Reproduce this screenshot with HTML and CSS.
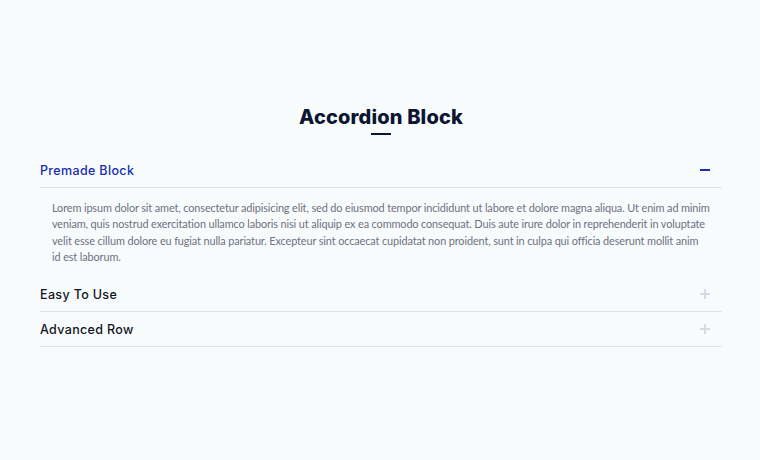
FILE: index.html
```html
<!DOCTYPE html>
<html>
<head>
<meta charset="utf-8">
<link rel="stylesheet" href="styles.css">
</head>
<body>
<div class="wrap">
  <h2 class="title">Accordion Block</h2>
  <div class="title-bar"></div>
  <div class="accordion">
    <div class="item open">
      <div class="head">
        <span class="label">Premade Block</span>
        <span class="icon minus"></span>
      </div>
      <div class="body">
        Lorem ipsum dolor sit amet, consectetur adipisicing elit, sed do eiusmod tempor incididunt ut labore et dolore magna aliqua. Ut enim ad minim veniam, quis nostrud exercitation ullamco laboris nisi ut aliquip ex ea commodo consequat. Duis aute irure dolor in reprehenderit in voluptate velit esse cillum dolore eu fugiat nulla pariatur. Excepteur sint occaecat cupidatat non proident, sunt in culpa qui officia deserunt mollit anim id&nbsp;est laborum.
      </div>
    </div>
    <div class="item">
      <div class="head">
        <span class="label">Easy To Use</span>
        <span class="icon plus"></span>
      </div>
    </div>
    <div class="item">
      <div class="head">
        <span class="label">Advanced Row</span>
        <span class="icon plus"></span>
      </div>
    </div>
  </div>
</div>
</body>
</html>
```
FILE: styles.css
```css
html, body {
  margin: 0;
  padding: 0;
  background: #f8fbfc;
}
.wrap {
  width: 682px;
  margin: 0 auto;
  padding-top: 104px;
  padding-left: 2px;
}
.title {
  margin: 0;
  text-align: center;
  font-family: Inter, "Open Sans", sans-serif;
  font-weight: 800;
  font-size: 20px;
  line-height: 26px;
  color: #0c1531;
  letter-spacing: 0.15px;
}
.title-bar {
  width: 20px;
  height: 2px;
  background: #0c1531;
  margin: 3px auto 0;
}
.accordion {
  margin-top: 18px;
}
.head {
  display: flex;
  align-items: center;
  justify-content: space-between;
  height: 34px;
  border-bottom: 1px solid #dfe3e8;
}
.label {
  font-family: Inter, "Open Sans", sans-serif;
  font-size: 12.5px;
  font-weight: 500;
  color: #111523;
  letter-spacing: 0.35px;
}
.open .label {
  color: #1a2db0;
}
.icon {
  position: relative;
  width: 10px;
  height: 10px;
  margin-right: 12px;
}
.icon::before, .icon::after {
  content: "";
  position: absolute;
  background: #d5dbe3;
}
.icon::before {
  left: 0;
  top: 4px;
  width: 10px;
  height: 2px;
}
.plus::after {
  left: 4px;
  top: 0;
  width: 2px;
  height: 10px;
}
.minus::before {
  background: #1a2db0;
}
.body {
  padding: 12px 6px 12px 12px;
  font-family: Lato, "Open Sans", sans-serif;
  font-size: 10.9px;
  line-height: 16.3px;
  letter-spacing: -0.12px;
  color: #6e7180;
}
```
